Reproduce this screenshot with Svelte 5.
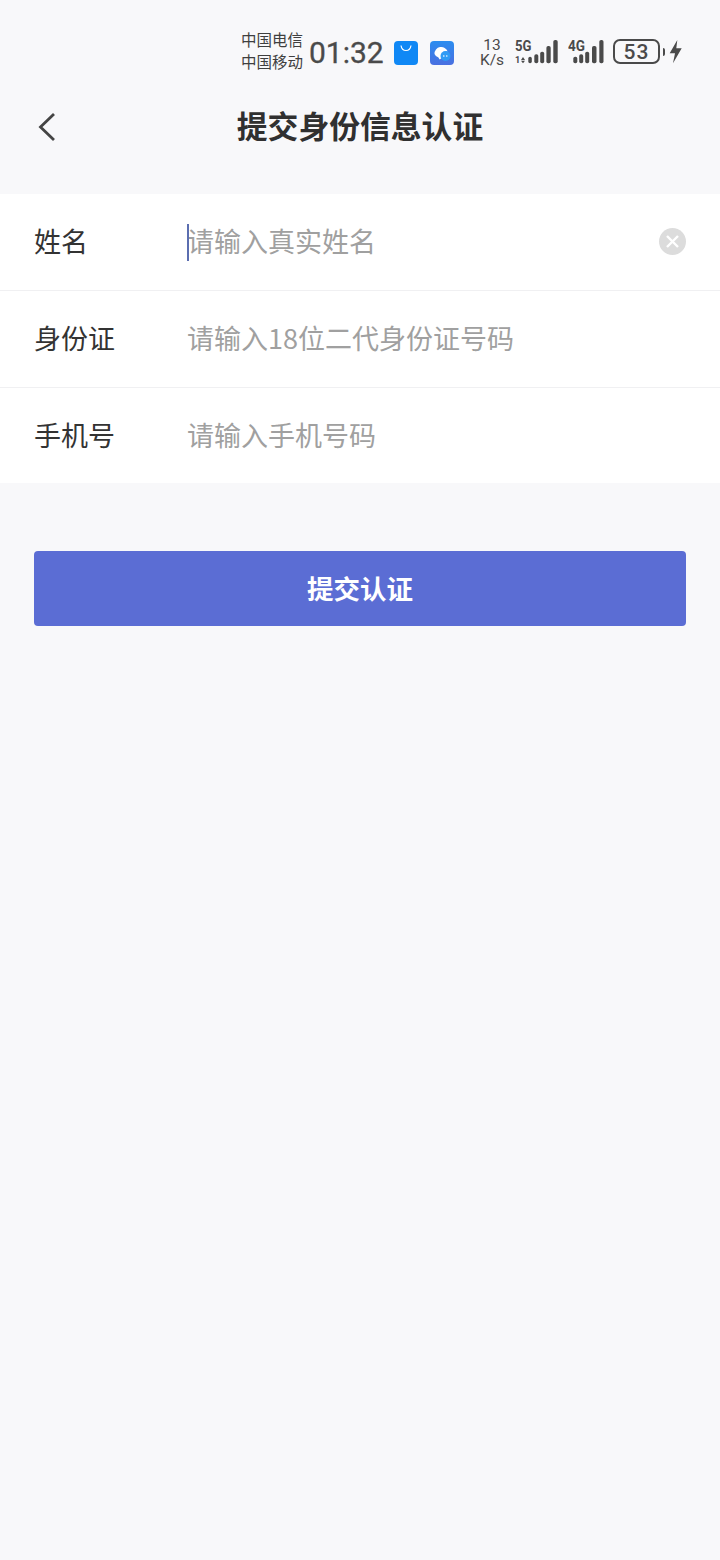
<script>
  const fields = [
    { label: '姓名', hint: '请输入真实姓名', active: true },
    { label: '身份证', hint: '请输入18位二代身份证号码' },
    { label: '手机号', hint: '请输入手机号码' }
  ];
</script>

<main>
  <div class="status">
    <div class="carrier"><span>中国电信</span><span>中国移动</span></div>
    <span class="time">01:32</span>
    <svg class="app bag" width="24" height="24" viewBox="0 0 24 24">
      <rect width="24" height="24" rx="4" fill="#1088f5" />
      <path d="M7 4.500c.6 4 2.400 5 5 5s4.400-1 5-5" fill="none" stroke="#fff" stroke-width="1.200" />
    </svg>
    <svg class="app msg" width="24" height="24" viewBox="0 0 24 24">
      <defs>
        <linearGradient id="msgbg" x1="0" y1="0" x2="0" y2="1">
          <stop offset="0" stop-color="#2b8df0" />
          <stop offset="1" stop-color="#4a6fe0" />
        </linearGradient>
      </defs>
      <rect width="24" height="24" rx="4" fill="url(#msgbg)" />
      <path d="M4.500 13a6.800 6.800 0 0 1 13.200-2.500 5 5 0 0 0-6 6.500l-2 1.500c-.8-1-1-1.500-1.200-2A6 6 0 0 1 4.500 13z" fill="#fff" />
      <circle cx="15.500" cy="15" r="5" fill="#2f9bf5" />
      <circle cx="13.800" cy="15" r=".8" fill="#fff" />
      <circle cx="16.800" cy="15" r=".8" fill="#fff" />
    </svg>
    <div class="speed"><span>13</span><span>K/s</span></div>
    <svg class="sig five" width="44" height="30" viewBox="0 -5 44 30">
      <text x="1" y="10.700" class="net" textLength="16.500" lengthAdjust="spacingAndGlyphs">5G</text>
      <text x="1" y="23.300" class="sim">1</text>
      <path d="M7 20h4l-2-3zM7 20.800h4l-2 2.500z" />
      <rect x="14.300" y="16.700" width="3.500" height="6.600" rx="1.700" />
      <rect x="20.300" y="14.300" width="4" height="9" rx="1.800" />
      <rect x="26.200" y="11.700" width="4" height="11.600" rx="1.800" />
      <rect x="32.400" y="6" width="4.300" height="17.300" rx="1.800" />
      <rect x="39.300" y="0" width="4.400" height="23.300" rx="1.800" />
    </svg>
    <svg class="sig four" width="36" height="30" viewBox="0 -5 36 30">
      <text x="0" y="10.700" class="net" textLength="17" lengthAdjust="spacingAndGlyphs">4G</text>
      <rect x="5.300" y="16.700" width="4" height="6.600" rx="1.800" />
      <rect x="11.200" y="14.300" width="4" height="9" rx="1.800" />
      <rect x="17.200" y="11.700" width="4" height="11.600" rx="1.800" />
      <rect x="24" y="6" width="4.500" height="17.300" rx="1.800" />
      <rect x="31.300" y="0" width="4.200" height="23.300" rx="1.800" />
    </svg>
    <div class="battery"><span>53</span></div>
    <span class="nub"></span>
    <svg class="bolt" width="14" height="24" viewBox="0 0 14 24">
      <path d="M8.300 0 .7 13.300H6L4 23.300 12.700 8.300H7.300z" fill="#4a4a4a" />
    </svg>
  </div>

  <header class="nav">
    <button class="back" aria-label="返回">
      <svg width="18" height="30" viewBox="0 0 18 30">
        <path d="M16 2 2.500 15 16 28" fill="none" stroke="#444" stroke-width="2.800" />
      </svg>
    </button>
    <h1>提交身份信息认证</h1>
  </header>

  <section class="form">
    {#each fields as f}
      <div class="row">
        <span class="label">{f.label}</span>
        <span class="hint" class:active={f.active}>{f.hint}</span>
        {#if f.active}
          <svg class="clear" width="27" height="27" viewBox="0 0 27 27">
            <circle cx="13.500" cy="13.500" r="13.500" fill="#dcdcdc" />
            <path d="M8 8l11 11M19 8 8 19" stroke="#fff" stroke-width="2.400" />
          </svg>
        {/if}
      </div>
    {/each}
  </section>

  <button class="submit">提交认证</button>
</main>

<style>
  :global(body) {
    margin: 0;
    background: #f8f8fa;
  }

  main {
    min-height: 1560px;
    background: #f8f8fa;
    font-family: "Noto Sans CJK SC", "Noto Sans", sans-serif;
  }

  .status {
    height: 80px;
    box-sizing: border-box;
    padding: 29px 37px 0 0;
    display: flex;
    justify-content: flex-end;
    align-items: flex-start;
    color: #4a4a4a;
  }

  .carrier {
    display: flex;
    flex-direction: column;
    margin-top: -1px;
    font-size: 15.500px;
    line-height: 22px;
    color: #3f3f3f;
  }

  .time {
    margin-left: 6px;
    font-family: Roboto, sans-serif;
    font-size: 30px;
    line-height: 48px;
    width: 76px;
    white-space: nowrap;
    -webkit-text-stroke: 0.3px #4a4a4a;
  }

  .app {
    margin-top: 12px;
  }

  .bag {
    margin-left: 9px;
  }

  .msg {
    margin-left: 12px;
  }

  .speed {
    margin: 9px 0 0 25px;
    width: 26px;
    display: flex;
    flex-direction: column;
    align-items: center;
    font-family: Roboto, sans-serif;
    font-size: 15.500px;
    line-height: 15px;
  }

  .sig {
    margin-top: 6px;
    fill: #4a4a4a;
  }

  .five {
    margin-left: 9px;
  }

  .four {
    margin-left: 10px;
  }

  .net {
    font-family: Roboto, sans-serif;
    font-size: 15px;
    font-weight: 700;
  }

  .sim {
    font-family: Roboto, sans-serif;
    font-size: 9px;
    font-weight: 700;
  }

  .battery {
    margin: 10px 0 0 9px;
    width: 47px;
    height: 25px;
    box-sizing: border-box;
    border: 2px solid #4a4a4a;
    border-radius: 7px;
    display: flex;
    align-items: center;
    justify-content: center;
    font-family: Roboto, sans-serif;
    font-size: 21px;
    font-weight: 500;
    letter-spacing: 1px;
  }

  .nub {
    margin: 19px 0 0 3px;
    width: 2px;
    height: 8px;
    border-radius: 0 2px 2px 0;
    background: #4a4a4a;
  }

  .bolt {
    margin: 11px 0 0 4px;
  }

  .nav {
    position: relative;
    height: 94px;
    display: flex;
    justify-content: center;
  }

  .nav h1 {
    margin: 0;
    height: 90px;
    font-size: 30.800px;
    line-height: 90px;
    font-weight: 700;
    color: #303030;
  }

  .back {
    position: absolute;
    left: 38px;
    top: 32px;
    padding: 0;
    border: 0;
    background: none;
    line-height: 0;
  }

  .form {
    margin-top: 20px;
    background: #fff;
  }

  .row {
    height: 96px;
    display: flex;
    align-items: center;
    padding-right: 34px;
    padding-left: 34px;
  }

  .row + .row {
    border-top: 1px solid #f0f0f2;
  }

  .row:last-child {
    height: 94px;
    padding-top: 1px;
  }

  .label {
    width: 153px;
    padding-bottom: 4px;
    font-size: 27px;
    color: #333;
  }

  .hint {
    flex: 1;
    padding-bottom: 4px;
    font-size: 27px;
    color: #a0a0a0;
  }

  .hint.active {
    position: relative;
  }

  .hint.active::before {
    content: "";
    position: absolute;
    left: 0;
    top: 3px;
    height: 37px;
    width: 2px;
    background: #5b6eb0;
  }

  .clear {
    margin-bottom: 2px;
  }

  .submit {
    display: block;
    margin: 68px 34px 0;
    width: 652px;
    height: 75px;
    padding: 0 0 2px;
    border: 0;
    border-radius: 4px;
    background: #5b6dd4;
    color: #fff;
    font-family: inherit;
    font-size: 26.500px;
    font-weight: 700;
  }
</style>
